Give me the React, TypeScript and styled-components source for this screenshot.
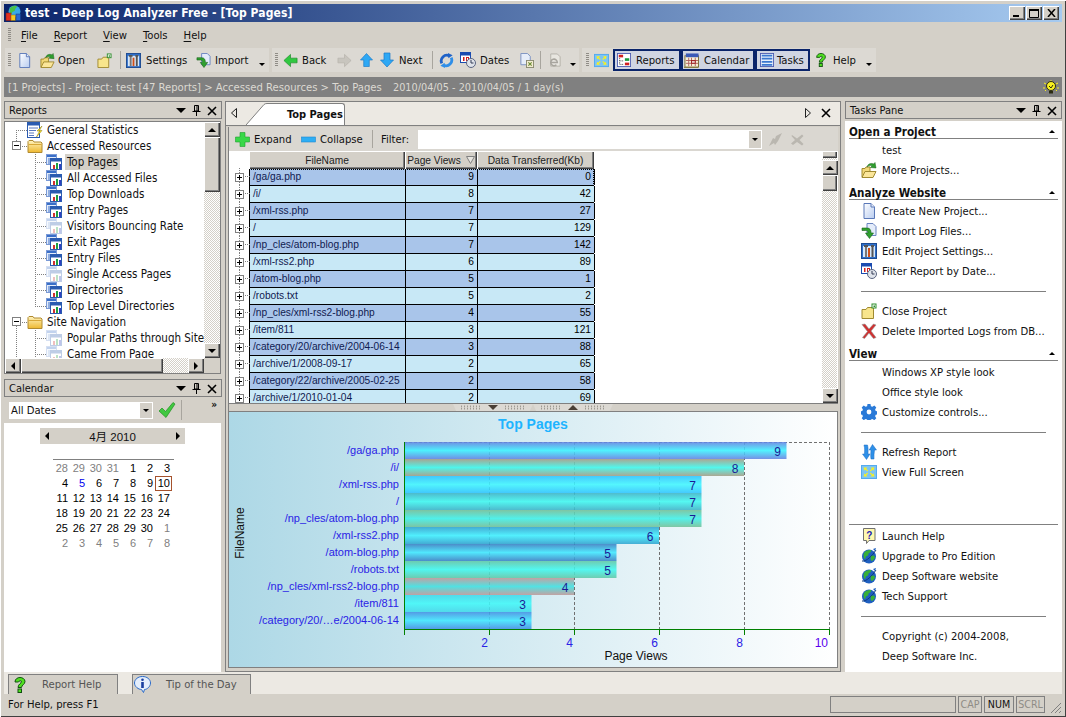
import React from 'react';
import styled, { createGlobalStyle, css } from 'styled-components';

const Global = createGlobalStyle`
    html, body { margin: 0; padding: 0; background: #d4d0c8; }
    #root { width: 1066px; height: 717px; overflow: hidden; }
    * { box-sizing: border-box; }
    svg { flex: none; display: block; }
`;

const raised = css`
    background: #d4d0c8;
    box-shadow: inset 1px 1px 0 #ffffff, inset -1px -1px 0 #404040, inset -2px -2px 0 #808080;
`;

const checker = css`
    background: repeating-conic-gradient(#ffffff 0 25%, #d4d0c8 0 50%) 0 0 / 2px 2px;
`;

const Window = styled.div`
    width: 1066px;
    height: 717px;
    display: flex;
    flex-direction: column;
    padding: 4px 4px 3px;
    background: #d4d0c8;
    box-shadow: inset 1px 1px 0 #ffffff, inset -1px -1px 0 #404040;
    font-family: "DejaVu Sans Condensed", "DejaVu Sans", sans-serif;
    font-stretch: condensed;
    font-size: 11.2px;
    color: #111111;
`;

const TitleBar = styled.div`
    height: 18px;
    flex: none;
    display: flex;
    align-items: center;
    padding: 0 3px 0 1px;
    background: linear-gradient(to right, #0a246a, #a6caf0);
    color: #ffffff;
    font-weight: bold;
    font-size: 12px;
    letter-spacing: 0.1px;
`;

const TitleText = styled.span`
    margin-left: 3px;
    flex: 1;
    white-space: nowrap;
`;

const CaptionButton = styled.div`
    ${raised}
    width: 16px;
    height: 14px;
    margin-left: 1px;
    color: #000000;
    display: flex;
    align-items: center;
    justify-content: center;
`;

const MenuBar = styled.div`
    height: 26px;
    flex: none;
    display: flex;
    align-items: center;
    gap: 16px;
`;

const Grip = styled.div<{ $ml?: number; $mr?: number }>`
    width: 3px;
    height: 14px;
    flex: none;
    margin-left: ${p => p.$ml ?? 3}px;
    margin-right: ${p => p.$mr ?? 5}px;
    background: repeating-linear-gradient(to bottom, #8f8c86 0 1px, transparent 1px 2px);
`;

const MenuItem = styled.span`
    white-space: nowrap;
    u { text-underline-offset: 2px; }
`;

const ToolRow = styled.div`
    height: 24px;
    flex: none;
    display: flex;
    gap: 3px;
    margin-left: 1px;
`;

const Toolbar = styled.div<{ $w: number }>`
    width: ${p => p.$w}px;
    flex: none;
    display: flex;
    align-items: center;
    background: #dcd9d3;
`;

const ToolButton = styled.div<{ $w: number; $pad: number; $gap?: number; $active?: boolean }>`
    width: ${p => p.$w}px;
    height: 22px;
    flex: none;
    display: flex;
    align-items: center;
    padding-left: ${p => p.$pad}px;
    gap: ${p => p.$gap ?? 4}px;
    white-space: nowrap;
    ${p => p.$active && css`
        border: 2px solid #0a246a;
        background: #d0d5e2;
    `}
`;

const ToolSep = styled.div<{ $ml: number; $mr: number }>`
    width: 1px;
    height: 18px;
    flex: none;
    margin-left: ${p => p.$ml}px;
    margin-right: ${p => p.$mr}px;
    background: #a8a59e;
`;

const DropArrow = styled.div`
    flex: 1;
    height: 22px;
    display: flex;
    align-items: flex-end;
    justify-content: center;
    padding-bottom: 5px;
    &::after {
        content: '';
        width: 0;
        height: 0;
        border-left: 3px solid transparent;
        border-right: 3px solid transparent;
        border-top: 3px solid #000000;
    }
`;

const Breadcrumb = styled.div`
    height: 20px;
    flex: none;
    margin-top: 5px;
    display: flex;
    align-items: center;
    padding: 0 2px 0 4px;
    background: #808080;
    color: #dcd9d2;
    white-space: nowrap;
`;

const Crumbs = styled.span`
    width: 385px;
    flex: none;
`;

const CrumbRange = styled.span`
    flex: 1;
    font-size: 10.8px;
`;

const Main = styled.div`
    height: 571px;
    flex: none;
    margin-top: 4px;
    display: flex;
`;

const LeftColumn = styled.div`
    width: 218px;
    flex: none;
    display: flex;
    flex-direction: column;
`;

const PaneTitle = styled.div`
    height: 18px;
    flex: none;
    display: flex;
    align-items: center;
    padding: 1px 4px 0;
    border: 1px solid #808080;
    background: #d4d0c8;
`;

const PaneName = styled.span`
    flex: 1;
    font-size: 11px;
`;

const PaneTools = styled.div`
    display: flex;
    align-items: center;
    gap: 6px;
`;

const TreeBox = styled.div`
    width: 217px;
    height: 253px;
    margin-top: 2px;
    flex: none;
    display: flex;
    flex-direction: column;
    border: 1px solid #808080;
    background: #ffffff;
`;

const TreeTop = styled.div`
    flex: 1;
    min-height: 0;
    display: flex;
`;

const TreeBody = styled.div`
    flex: 1;
    min-width: 0;
    overflow: hidden;
`;

type GuideKind = 'full' | 'top' | 'bottom';

const dotV = (x: number, kind: GuideKind = 'full') => {
    const top = kind === 'bottom' ? 8 : 0;
    const height = kind === 'full' ? '100%' : kind === 'top' ? '9px' : '8px';
    return `repeating-linear-gradient(to bottom, #808080 0 1px, transparent 1px 2px) ${x}px ${top}px / 1px ${height} no-repeat`;
};
const dotH = (x: number, w: number) =>
    `repeating-linear-gradient(to right, #808080 0 1px, transparent 1px 2px) ${x}px 8px / ${w}px 1px no-repeat`;

const TreeRow = styled.div<{ $level: number; $guide?: GuideKind; $outer?: boolean }>`
    height: 16px;
    display: flex;
    align-items: center;
    white-space: nowrap;
    padding-left: ${p => (p.$level ? 41 : 22)}px;
    gap: ${p => (p.$level ? 3 : 2)}px;
    position: relative;
    background: ${p => {
        const x = p.$level ? 30 : 11;
        const parts = [dotH(x, p.$level ? 11 : 12)];
        if (p.$guide) parts.push(dotV(x, p.$guide));
        if (p.$outer) parts.push(dotV(11));
        return parts.join(', ');
    }};
`;

const TreeLabel = styled.span<{ $selected?: boolean }>`
    padding: 0 2px;
    line-height: 16px;
    font-size: 11.5px;
    background: ${p => (p.$selected ? '#d4d0c8' : 'transparent')};
`;

const Expander = styled.div`
    position: absolute;
    top: 3px;
    width: 9px;
    height: 9px;
    border: 1px solid #808080;
    background:
        linear-gradient(#000000, #000000) center / 5px 1px no-repeat,
        #ffffff;
`;

const TreeExpander = styled(Expander)`
    left: 7px;
`;

const VScroll = styled.div`
    width: 16px;
    flex: none;
    display: flex;
    flex-direction: column;
    ${checker}
`;

const HScroll = styled.div`
    height: 15px;
    flex: none;
    display: flex;
    ${checker}
`;

const ScrollButton = styled.div`
    ${raised}
    width: 16px;
    height: 15px;
    flex: none;
    display: flex;
    align-items: center;
    justify-content: center;
`;

const VThumb = styled.div<{ $h: number }>`
    ${raised}
    height: ${p => p.$h}px;
    flex: none;
`;

const HThumb = styled.div<{ $w: number }>`
    ${raised}
    width: ${p => p.$w}px;
    flex: none;
`;

const ScrollFill = styled.div`
    flex: 1;
`;

const ScrollCorner = styled.div`
    width: 16px;
    flex: none;
    background: #d4d0c8;
`;

const Tri = styled.div<{ $dir: 'up' | 'down' | 'left' | 'right'; $size?: number; $color?: string }>`
    width: 0;
    height: 0;
    flex: none;
    ${p => {
        const s = p.$size ?? 4;
        const c = p.$color ?? '#000000';
        switch (p.$dir) {
            case 'up':
                return `border-left:${s}px solid transparent;border-right:${s}px solid transparent;border-bottom:${s}px solid ${c};`;
            case 'down':
                return `border-left:${s}px solid transparent;border-right:${s}px solid transparent;border-top:${s}px solid ${c};`;
            case 'left':
                return `border-top:${s}px solid transparent;border-bottom:${s}px solid transparent;border-right:${s}px solid ${c};`;
            default:
                return `border-top:${s}px solid transparent;border-bottom:${s}px solid transparent;border-left:${s}px solid ${c};`;
        }
    }}
`;

const CalendarTitle = styled(PaneTitle)`
    margin-top: 5px;
`;

const CalendarBar = styled.div`
    height: 26px;
    flex: none;
    display: flex;
    align-items: center;
    padding-left: 5px;
    width: 217px;
`;

const DateCombo = styled.div`
    width: 144px;
    height: 17px;
    flex: none;
    display: flex;
    align-items: center;
    justify-content: space-between;
    background: #ffffff;
    padding: 1px 1px 1px 2px;
`;

const ComboArrow = styled.div`
    ${raised}
    box-shadow: none;
    width: 12px;
    height: 100%;
    display: flex;
    align-items: center;
    justify-content: center;
`;

const CheckSlot = styled.div`
    margin-left: 5px;
`;

const CalendarSep = styled.div`
    width: 1px;
    height: 20px;
    margin-left: 5px;
    background: #a8a59e;
`;

const More = styled.div`
    flex: 1;
    align-self: flex-start;
    margin-top: 2px;
    padding-right: 4px;
    text-align: right;
    font-size: 10px;
    font-weight: bold;
    line-height: 12px;
`;

const CalendarBody = styled.div`
    width: 217px;
    flex: 1;
    background: #ffffff;
    padding-top: 5px;
`;

const MonthHeader = styled.div`
    width: 145px;
    height: 16px;
    margin-left: 36px;
    display: flex;
    align-items: center;
    justify-content: space-between;
    padding: 0 5px;
    background: #d4d0c8;
    font-family: "Liberation Sans", "Noto Sans CJK JP", sans-serif;
    font-size: 11.5px;
`;

const WeekLine = styled.div`
    width: 121px;
    height: 1px;
    margin: 15px 0 1px 49px;
    background: #808080;
`;

const Days = styled.div`
    width: 119px;
    margin-left: 49px;
    display: grid;
    grid-template-columns: repeat(7, 17px);
    grid-auto-rows: 15px;
    font-family: "Liberation Sans", sans-serif;
    font-size: 11px;
`;

const Day = styled.div<{ $muted?: boolean; $mark?: boolean; $today?: boolean }>`
    text-align: right;
    padding-right: ${p => (p.$today ? 1 : 2)}px;
    line-height: ${p => (p.$today ? 13 : 15)}px;
    color: ${p => (p.$muted ? '#808080' : p.$mark ? '#0000ee' : '#000000')};
    border: ${p => (p.$today ? '1px solid #a5522d' : 'none')};
`;

const Center = styled.div`
    width: 616px;
    flex: none;
    margin-left: 3px;
    display: flex;
    flex-direction: column;
`;

const TabStrip = styled.div`
    height: 24px;
    flex: none;
    display: flex;
    align-items: flex-end;
    padding: 0 9px 0 5px;
    background: #ece9e3;
    border: 1px solid #808080;
    border-bottom: none;
`;

const StripArrow = styled.div`
    height: 100%;
    display: flex;
    align-items: center;
    padding-bottom: 2px;
`;

const TabShape = styled.svg`
    margin-left: 9px;
`;

const ActiveTab = styled.div`
    width: 58px;
    height: 22px;
    flex: none;
    display: flex;
    align-items: center;
    background: #ffffff;
    border: 1px solid #808080;
    border-left: none;
    border-bottom: none;
    border-radius: 0 3px 0 0;
    font-weight: bold;
    font-size: 11px;
    white-space: nowrap;
`;

const StripFill = styled.div`
    flex: 1;
`;

const StripTools = styled.div`
    height: 100%;
    display: flex;
    align-items: center;
    gap: 10px;
    padding-bottom: 2px;
`;

const Frame = styled.div`
    flex: 1;
    min-height: 0;
    display: flex;
    flex-direction: column;
    border: 1px solid #808080;
    padding: 1px 2px 3px;
    background: #d4d0c8;
`;

const Inner = styled.div`
    flex: 1;
    min-height: 0;
    display: flex;
    flex-direction: column;
    border-left: 1px solid #808080;
`;

const GridToolbar = styled.div`
    height: 24px;
    flex: none;
    display: flex;
    align-items: center;
    background: #dad7d1;
    padding-left: 6px;
`;

const GridAction = styled.div<{ $w: number }>`
    width: ${p => p.$w}px;
    flex: none;
    display: flex;
    align-items: center;
    gap: 4px;
`;

const FilterLabel = styled.span`
    width: 37px;
    flex: none;
    margin-left: 8px;
`;

const FilterBox = styled.div`
    width: 344px;
    height: 19px;
    flex: none;
    display: flex;
    justify-content: flex-end;
    background: #ffffff;
    padding: 1px;
`;

const FilterActions = styled.div`
    display: flex;
    align-items: center;
    gap: 7px;
    margin-left: 6px;
`;

const GridArea = styled.div`
    height: 252px;
    flex: none;
    display: flex;
    background: #ffffff;
`;

const GridScroll = styled(VScroll)`
    width: 15px;
    margin-right: 1px;
`;

const ScrollStub = styled.div`
    ${raised}
    height: 7px;
    flex: none;
    margin-bottom: 2px;
`;

const GridBody = styled.div`
    flex: 1;
    min-width: 0;
    overflow: hidden;
    padding-left: 20px;
    position: relative;
    font-family: "Liberation Sans", sans-serif;
    font-size: 10.2px;
`;

const GridCols = css`
    display: grid;
    grid-template-columns: 156px 72px 117px;
    width: 345px;
`;

const HeaderRow = styled.div`
    ${GridCols}
    height: 18px;
`;

const HeaderCell = styled.div`
    ${raised}
    display: flex;
    align-items: center;
    justify-content: center;
    gap: 5px;
    color: #222222;
    white-space: nowrap;
`;

const DataRow = styled.div<{ $odd: boolean; $focus?: boolean }>`
    ${GridCols}
    height: 17px;
    position: relative;
    background: ${p => (p.$odd ? '#c8e8f6' : '#a9c5ea')};
    border-bottom: 1px solid #000000;
    border-left: 1px solid #000000;
    outline: ${p => (p.$focus ? '1px dotted #000000' : 'none')};
    outline-offset: -1px;
`;

const DataCell = styled.div<{ $num?: boolean }>`
    line-height: 16px;
    padding: 0 3px;
    text-align: ${p => (p.$num ? 'right' : 'left')};
    color: ${p => (p.$num ? '#000000' : '#101a50')};
    border-right: 1px solid #000000;
    white-space: nowrap;
`;

const RowExpander = styled(Expander)`
    left: -15px;
    top: 4px;
    background:
        linear-gradient(#000000, #000000) center / 5px 1px no-repeat,
        linear-gradient(#000000, #000000) center / 1px 5px no-repeat,
        #ffffff;
`;

const RowGuide = styled.div`
    position: absolute;
    left: -11px;
    top: -1px;
    bottom: -1px;
    width: 11px;
    background: ${dotV(0)}, repeating-linear-gradient(to right, #808080 0 1px, transparent 1px 2px) 0 8px / 11px 1px no-repeat;
`;

const Splitter = styled.div`
    height: 8px;
    flex: none;
    display: flex;
    padding-left: 224px;
    border-top: 1px solid #808080;
`;

const SplitGrip = styled.div`
    width: 80px;
    height: 7px;
    flex: none;
    display: flex;
    align-items: center;
    justify-content: center;
    gap: 6px;
    background: #dcd9d3;
    clip-path: polygon(0 0, 100% 0, 96% 100%, 4% 100%);
`;

const SplitDots = styled.div`
    width: 22px;
    height: 5px;
    background: radial-gradient(circle, #8f8b83 0 0.7px, transparent 0.9px) 0 0 / 3px 2.500px;
`;

const ChartBox = styled.div`
    flex: 1;
    min-height: 0;
    border: 1px solid #808080;
    border-left: none;
    background: linear-gradient(to right, #add8e6, #ffffff);
`;

const ChartSvg = styled.svg`
    width: 608px;
    height: 257px;
    font-family: "Liberation Sans", Arial, sans-serif;
    font-size: 12px;
`;

const Right = styled.div`
    width: 217px;
    flex: none;
    margin-left: 4px;
    display: flex;
    flex-direction: column;
`;

const TasksBody = styled.div`
    flex: 1;
    margin-top: 2px;
    background: #ffffff;
    padding: 3px 4px 0;
`;

const SectionHead = styled.div<{ $first?: boolean }>`
    height: 15px;
    margin: ${p => (p.$first ? 0 : 5)}px 0 1px;
    display: flex;
    align-items: center;
    justify-content: space-between;
    padding: 1px 3px 0 0;
    border-bottom: 1px solid #808080;
    font-weight: bold;
    font-size: 11.6px;
    white-space: nowrap;
`;

const TaskRow = styled.div`
    height: 20px;
    display: flex;
    align-items: center;
    gap: 5px;
    padding-left: 12px;
    white-space: nowrap;
`;

const TaskIcon = styled.div`
    width: 16px;
    height: 16px;
    flex: none;
`;

const TaskSep = styled.div`
    height: 20px;
    margin: 0 12px;
    display: flex;
    align-items: center;
    &::after {
        content: '';
        flex: 1;
        height: 1px;
        background: #808080;
    }
`;

const WideSep = styled.div`
    height: 1px;
    margin: 42px 0 1px;
    background: #808080;
`;

const BottomTabs = styled.div`
    height: 22px;
    flex: none;
    display: flex;
    align-items: flex-end;
    background: #ece9e3;
    padding-left: 4px;
`;

const BottomTab = styled.div<{ $w: number; $ml?: number; $pad: number; $gap: number }>`
    width: ${p => p.$w}px;
    height: 20px;
    flex: none;
    margin-left: ${p => p.$ml ?? 0}px;
    display: flex;
    align-items: center;
    gap: ${p => p.$gap}px;
    padding-left: ${p => p.$pad}px;
    background: #d4d0c8;
    border: 1px solid #808080;
    border-bottom: none;
    color: #555555;
    white-space: nowrap;
`;

const StatusBar = styled.div`
    height: 20px;
    flex: none;
    display: flex;
    align-items: center;
    gap: 2px;
    padding: 1px 0 0 4px;
`;

const StatusText = styled.span`
    flex: 1;
`;

const StatusPanel = styled.div<{ $w: number; $off?: boolean }>`
    width: ${p => p.$w}px;
    height: 17px;
    flex: none;
    text-align: center;
    line-height: 15px;
    font-size: 10.6px;
    border: 1px solid #808080;
    color: ${p => (p.$off ? '#8f8c86' : '#111111')};
`;

const SizeGrip = styled.svg`
    margin-left: 1px;
    align-self: flex-end;
`;

/* ---- icons ---- */

type IconProps = { size?: number };

const PageIcon = ({ size = 16 }: IconProps) => (
    <svg width={size} height={size} viewBox="0 0 16 16">
        <defs>
            <linearGradient id="pg" x1="0" y1="0" x2="1" y2="1">
                <stop offset="0" stopColor="#ffffff" />
                <stop offset="1" stopColor="#b8ccf0" />
            </linearGradient>
        </defs>
        <path d="M3 .5h7l3.500 3.500v11.500h-10.500z" fill="url(#pg)" stroke="#5a78b8" />
        <path d="M10 .5v3.500h3.500" fill="#e8eefa" stroke="#5a78b8" />
    </svg>
);

const OpenIcon = ({ size = 16 }: IconProps) => (
    <svg width={size} height={size} viewBox="0 0 16 16">
        <path d="M1 6.500h3l1-1.500h4v10h-8z" fill="#f2d878" stroke="#a08a30" />
        <path d="M1 15.500l3-6h11l-3 6z" fill="#fbe69a" stroke="#a08a30" />
        <path d="M6 5c1-4 5-4 7-3l1-1.500 1 5.500-5.500-.5 1.500-1.500c-1.500-.7-3.500-.5-5 1z" fill="#2e9e2e" stroke="#176117" strokeWidth=".5" />
    </svg>
);

const FolderGreen = ({ size = 16 }: IconProps) => (
    <svg width={size} height={size} viewBox="0 0 16 16">
        <path d="M1 6.500h4l1.500-2h6v11h-11.500z" fill="#f8e58c" stroke="#a08a30" />
        <rect x="11" y="1" width="4" height="4" fill="#ffffff" stroke="#2e8e2e" />
        <rect x="12.500" y="2.500" width="1.500" height="1.500" fill="#2e8e2e" />
    </svg>
);

const SettingsIcon = ({ size = 16 }: IconProps) => (
    <svg width={size} height={size} viewBox="0 0 16 16">
        <rect x=".5" y=".5" width="15" height="15" fill="#2f6fc8" stroke="#1c4a92" />
        <rect x="2" y="3" width="12" height="11" fill="#d6e8fb" />
        <path d="M5 3v11" stroke="#777777" strokeWidth="2" />
        <path d="M8 5v9" stroke="#d05018" strokeWidth="2" />
        <path d="M11.500 3v11" stroke="#555555" strokeWidth="2" />
        <path d="M3 3h4M10 3h3" stroke="#555555" strokeWidth="2" />
    </svg>
);

const ImportIcon = ({ size = 16 }: IconProps) => (
    <svg width={size} height={size} viewBox="0 0 16 16">
        <path d="M6 .5h6l3 3v9h-9z" fill="#e4ecfa" stroke="#6a84c0" />
        <path d="M1 5h5c3 0 4 2 4 5h2.500l-4 5.500-4-5.500h2.500c0-2-1-2.500-2.500-2.500h-3.500z" fill="#2fa02f" stroke="#176117" strokeWidth=".6" />
    </svg>
);

const ArrowH = ({ dir, fill, line, size = 16 }: { dir: 'l' | 'r'; fill: string; line: string; size?: number }) => (
    <svg width={size} height={size} viewBox="0 0 16 16">
        <path
            d={dir === 'l' ? 'M1 8l7-6.500v4h7v5h-7v4z' : 'M15 8l-7-6.500v4h-7v5h7v4z'}
            fill={fill}
            stroke={line}
            strokeWidth=".7"
        />
    </svg>
);

const ArrowV = ({ dir, size = 14 }: { dir: 'u' | 'd'; size?: number }) => (
    <svg width={size} height={16} viewBox="0 0 14 16">
        <path
            d={dir === 'u' ? 'M7 1l6.500 7h-3.500v7h-6v-7h-3.500z' : 'M7 15l6.500-7h-3.500v-7h-6v7h-3.500z'}
            fill="#2ea8f4"
            stroke="#1a78c8"
            strokeWidth=".7"
        />
    </svg>
);

const RefreshIcon = ({ size = 16 }: IconProps) => (
    <svg width={size} height={size} viewBox="0 0 16 16" fill="none">
        <path d="M3 11a6 6 0 0 1 8-8" stroke="#1f62c8" strokeWidth="3" />
        <path d="M13 5a6 6 0 0 1-8 8" stroke="#2f8ee8" strokeWidth="3" />
        <path d="M9.500 0l5 2.500-4.500 3z" fill="#1f62c8" />
        <path d="M6.500 16l-5-2.500 4.500-3z" fill="#2f8ee8" />
    </svg>
);

const DatesIcon = ({ size = 16 }: IconProps) => (
    <svg width={size} height={size} viewBox="0 0 16 16">
        <rect x=".5" y=".5" width="10" height="10" fill="#ffffff" stroke="#1a4bb0" />
        <rect x="1" y="1" width="9" height="2.500" fill="#1a4bb0" />
        <rect x="3" y="5" width="1.500" height="4" fill="#d02020" />
        <rect x="6" y="5" width="3" height="4" fill="#d02020" />
        <rect x="7" y="6" width="1" height="2" fill="#ffffff" />
        <circle cx="11" cy="11" r="4.500" fill="#dfe3ea" stroke="#5a6580" />
        <path d="M11 8v3h2.500" stroke="#333a55" fill="none" />
    </svg>
);

const DocXIcon = ({ size = 16 }: IconProps) => (
    <svg width={size} height={size} viewBox="0 0 16 16">
        <path d="M2 .5h7l3 3v9h-10z" fill="#e6edf9" stroke="#7a90c0" />
        <rect x="8" y="8" width="7.500" height="7.500" fill="#f3ecd2" stroke="#8a8a70" />
        <path d="M10 10l3.500 3.500M13.500 10l-3.500 3.500" stroke="#6a8a30" strokeWidth="1.200" />
    </svg>
);

const GrayIE = ({ size = 16 }: IconProps) => (
    <svg width={size} height={size} viewBox="0 0 16 16">
        <path d="M4 1h7l3 3v10h-10z" fill="#e8e6e0" stroke="#b4b1aa" />
        <path d="M4 10h7a3.500 3.500 0 1 0-1 2.500" fill="none" stroke="#a8a59e" strokeWidth="1.600" />
    </svg>
);

const FullIcon = ({ size = 16 }: IconProps) => (
    <svg width={size} height={size} viewBox="0 0 16 16">
        <rect x="0" y="1" width="16" height="14" fill="#55aaee" />
        <rect x="1" y="2" width="14" height="12" fill="#7cc4f4" />
        <path d="M2.500 3.500h4l-1.300 1.300 2 1.700-1 1-1.700-2-1 1.300zM13.500 3.500h-4l1.300 1.300-2 1.700 1 1 1.700-2 1 1.300zM2.500 12.500h4l-1.300-1.300 2-1.700-1-1-1.700 2-1-1.300zM13.500 12.500h-4l1.300-1.300-2-1.700 1-1 1.700 2 1-1.300z" fill="#f8f020" />
    </svg>
);

const ReportsIcon = ({ size = 16 }: IconProps) => (
    <svg width={size} height={size} viewBox="0 0 16 16">
        <rect x=".5" y=".5" width="15" height="15" fill="#ffffff" stroke="#4a5ab0" />
        <rect x="2" y="2" width="5" height="3" fill="#d02020" />
        <rect x="9" y="6" width="5" height="3" fill="#1a9a3a" />
        <rect x="9" y="11" width="5" height="3" fill="#d02020" />
        <path d="M3 6v8M4 9h4M4 13h4" stroke="#222222" strokeDasharray="1 1" />
    </svg>
);

const CalendarIcon = ({ size = 16 }: IconProps) => (
    <svg width={size} height={size} viewBox="0 0 16 16">
        <rect x="1" y="3" width="14.500" height="12" fill="#f6f0d8" stroke="#7a6a30" />
        <rect x="2" y=".5" width="13.500" height="4" fill="#3a5ab8" />
        <path d="M5 5v9M8 5v9M12 5v9M2 8h13M2 11h13" stroke="#b06060" />
        <rect x="8" y="8" width="4" height="3" fill="#e8c8c8" stroke="#a02020" />
        <path d="M0 15.500h15" stroke="#8a7a40" />
    </svg>
);

const TasksIcon = ({ size = 16 }: IconProps) => (
    <svg width={size} height={size} viewBox="0 0 16 16">
        <rect x=".5" y=".5" width="15" height="15" fill="#e4eefb" stroke="#4a5ab0" />
        <path d="M2 3h12M2 6.500h12M2 10h12M2 13.500h12" stroke="#3a78d0" strokeWidth="2" />
    </svg>
);

const HelpIcon = ({ size = 16 }: IconProps) => (
    <svg width={size} height={size} viewBox="0 0 16 16">
        <path
            d="M3 5c0-3 2.500-4.500 5-4.500s5 1.500 5 4c0 3-3.500 3.500-3.500 6h-3.500c0-3.500 3.500-4 3.500-6 0-1-2.500-1-3 .5z"
            fill="#50e020"
            stroke="#105010"
        />
        <rect x="6" y="12" width="3.500" height="3.500" fill="#50e020" stroke="#105010" />
    </svg>
);

const TreeReportIcon = ({ off, size = 16 }: { off?: boolean; size?: number }) => (
    <svg width={size} height={size} viewBox="0 0 16 16" opacity={off ? 0.3 : 1}>
        <rect x=".5" y=".5" width="10" height="10" fill="#e4ecf9" stroke="#7a9ad6" />
        <rect x="1" y="1" width="9" height="2" fill="#3a6fc8" />
        <path d="M2 5h2M2 7h2M2 9h2" stroke="#3a6fc8" />
        <rect x="4.500" y="4.500" width="11" height="11" fill="#ffffff" stroke="#2a5bb0" />
        <rect x="5" y="5" width="10" height="2.500" fill="#2a5bb0" />
        <rect x="7" y="11" width="2" height="4" fill="#d03030" />
        <rect x="10" y="9" width="2" height="6" fill="#20a040" />
        <rect x="13" y="10" width="2" height="5" fill="#3040c0" />
    </svg>
);

const StatsIcon = ({ size = 16 }: IconProps) => (
    <svg width={size} height={size} viewBox="0 0 16 16">
        <rect x=".5" y=".5" width="12" height="15" fill="#ffffff" stroke="#2a5bb0" />
        <rect x="1" y="1" width="11" height="2.500" fill="#2a5bb0" />
        <path d="M2 6h9M2 8.500h7M2 11h5M2 13.500h5" stroke="#5a7ac0" />
        <path d="M15 4l-5 5h2.500l-3 6 5.500-6.500h-2.500z" fill="#f8e020" stroke="#8a7a10" strokeWidth=".5" />
    </svg>
);

const TreeFolder = ({ size = 16 }: IconProps) => (
    <svg width={size} height={size} viewBox="0 0 16 16">
        <defs>
            <linearGradient id="fo" x1="0" y1="0" x2="0" y2="1">
                <stop offset="0" stopColor="#fff4c0" />
                <stop offset="1" stopColor="#eeb830" />
            </linearGradient>
        </defs>
        <path d="M1 14.500v-11l1-1h4l1 1.500h7l1 1v9.500z" fill="url(#fo)" stroke="#b08a30" />
        <path d="M1.500 6.500h13" stroke="#d8a838" />
    </svg>
);

const CheckIcon = ({ size = 18 }: IconProps) => (
    <svg width={size} height={size} viewBox="0 0 18 18">
        <path d="M1 10l3-3 3.500 3.500 7.500-9 2 1.500-9 13.500z" fill="#40c840" stroke="#209020" strokeWidth=".7" />
    </svg>
);

const PlusIcon = ({ size = 15 }: IconProps) => (
    <svg width={size} height={size} viewBox="0 0 15 15">
        <path d="M5 .5h5v4.500h4.500v5h-4.500v4.500h-5v-4.500h-4.500v-5h4.500z" fill="#38d848" stroke="#20a030" strokeWidth=".6" />
    </svg>
);

const MinusIcon = ({ size = 15 }: IconProps) => (
    <svg width={size} height={size} viewBox="0 0 15 15">
        <rect x=".5" y="5" width="14" height="5" fill="#2eaef4" stroke="#2088d0" strokeWidth=".6" />
    </svg>
);

const GrayBolt = () => (
    <svg width="15" height="15" viewBox="0 0 15 15">
        <path d="M14 1l-6 3-1 3-2-1-4 8 5-3 1 2 3-4z" fill="#bab7b0" />
    </svg>
);

const GrayCross = () => (
    <svg width="15" height="15" viewBox="0 0 15 15">
        <path d="M2 3l5 3.500 5-4 1.500 1.500-4 4 4 4-1.500 1.500-5-3.500-4 3-2-1.500 4-3.500-3.500-4z" fill="#bab7b0" />
    </svg>
);

const RedX = ({ size = 16 }: IconProps) => (
    <svg width={size} height={size} viewBox="0 0 16 16">
        <path d="M1 1.500l3-.5 4 5 4.500-5 2.500 1-5 6 5 6.500-2.500 1-4.500-5.500-4.500 5.500-2-1 5-6z" fill="#d03030" stroke="#909090" strokeWidth=".6" />
    </svg>
);

const GearIcon = ({ size = 16 }: IconProps) => (
    <svg width={size} height={size} viewBox="0 0 16 16">
        <path
            d="M6.500 0h3l.4 2.200 1.500.6 1.900-1.200 2 2-1.200 1.900.6 1.500 2.200.4v3l-2.200.4-.6 1.500 1.200 1.900-2 2-1.900-1.200-1.500.6-.4 2.200h-3l-.4-2.200-1.500-.6-1.900 1.200-2-2 1.200-1.900-.6-1.500-2.200-.4v-3l2.200-.4.6-1.500-1.200-1.900 2-2 1.900 1.200 1.500-.6z"
            fill="#2a7ad8"
        />
        <circle cx="8" cy="8" r="2.400" fill="#ffffff" />
    </svg>
);

const RefreshVIcon = ({ size = 16 }: IconProps) => (
    <svg width={size} height={size} viewBox="0 0 16 16">
        <path d="M3 1h3.500c1 4 .5 6.500 .5 9h2l-3.500 5.500-4-5.500h2c0-3 .5-5-.5-9z" fill="#2e90e8" stroke="#1a68c0" strokeWidth=".5" />
        <path d="M13 15h-3c-.6-3-.2-6 0-9h-1.800l3.300-5.500 4 5.500h-2c-.3 3-.8 6-.5 9z" fill="#2e90e8" stroke="#1a68c0" strokeWidth=".5" />
    </svg>
);

const LaunchHelpIcon = ({ size = 16 }: IconProps) => (
    <svg width={size} height={size} viewBox="0 0 16 16">
        <path d="M2.500 .5h11.500v12h-6l-2.500 3v-3h-3z" fill="#fff8b0" stroke="#707070" />
        <text x="8.200" y="10.500" fontSize="10" fontWeight="bold" textAnchor="middle" fill="#1a1ab0" fontFamily="Liberation Sans">?</text>
    </svg>
);

const GlobeIcon = ({ size = 16 }: IconProps) => (
    <svg width={size} height={size} viewBox="0 0 16 16">
        <circle cx="8" cy="8.500" r="7" fill="#1f5fc0" />
        <path d="M3 5c2-3 5-3 7-3 1 1-1 3-2 3s0 3-2 3-1 3-2 3-2-3-1-6zM10 8c2-1 4 0 4 1s-2 4-3 4-2-3-1-5z" fill="#38b038" />
        <path d="M1 13c4 1 10-5 14-11" stroke="#0e3a80" fill="none" />
        <path d="M12 1l3-1-1 3z" fill="#1f5fc0" />
    </svg>
);

const AppIcon = () => (
    <svg width="17" height="16" viewBox="0 0 17 16">
        <circle cx="9.500" cy="6.500" r="6" fill="#38a8e8" />
        <path d="M5 3c2-2 5-2.500 7-2 0 2-2 2-2 4s-3 1-3 3-2 1-2-1-1-2 0-4z" fill="#48c048" />
        <rect x="1" y="8" width="5" height="7.500" fill="#e03020" stroke="#8a1810" strokeWidth=".5" />
        <rect x="6" y="10" width="4.500" height="5.500" fill="#f8c820" stroke="#907010" strokeWidth=".5" />
        <rect x="11" y="9" width="4.500" height="6.500" fill="#2a68d0" stroke="#123a80" strokeWidth=".5" />
    </svg>
);

const InfoIcon = ({ size = 17 }: IconProps) => (
    <svg width={size} height={size} viewBox="0 0 17 17">
        <path d="M8.500 .5c4.400 0 8 2.800 8 6.500s-3.600 6.500-6 6.500l-1 3-2-3c-3 0-7-2.800-7-6.500s3.600-6.500 8-6.500z" fill="#e4eefc" stroke="#2a6ac8" />
        <circle cx="8.500" cy="3.800" r="1.300" fill="#1a3fa0" />
        <rect x="7.200" y="6" width="2.600" height="6" fill="#1a3fa0" />
    </svg>
);

const BulbIcon = () => (
    <svg width="18" height="16" viewBox="0 0 18 16">
        <path d="M9 1v1M2 4l2 1M16 4l-2 1M1 9h2M15 9h2M3 12l1-1M15 12l-1-1" stroke="#f8f020" />
        <circle cx="9" cy="7" r="4.500" fill="#f8f020" stroke="#2a2a10" />
        <path d="M7 7l2 2 2-3" stroke="#2a2a10" fill="none" />
        <rect x="7" y="12" width="4" height="2.500" fill="#2a2a10" />
    </svg>
);

const PinIcon = () => (
    <svg width="9" height="11" viewBox="0 0 9 11">
        <path d="M2.500 .5h4v5.500h-4zM5 1v5" stroke="#000000" fill="none" />
        <path d="M.5 6.500h8M4.500 7v4" stroke="#000000" />
    </svg>
);

const CloseIcon = () => (
    <svg width="10" height="10" viewBox="0 0 10 10">
        <path d="M1 1l8 8M9 1l-8 8" stroke="#000000" strokeWidth="1.600" />
    </svg>
);

const HollowArrow = ({ dir }: { dir: 'l' | 'r' }) => (
    <svg width="6" height="10" viewBox="0 0 6 10">
        <path d={dir === 'l' ? 'M5.500 .5v9l-5-4.500z' : 'M.5 .5v9l5-4.500z'} fill="none" stroke="#222222" />
    </svg>
);

const PaneButtons = () => (
    <PaneTools>
        <Tri $dir="down" $size={5} />
        <PinIcon />
        <CloseIcon />
    </PaneTools>
);

/* ---- data ---- */

const statsRows = [
    ['/ga/ga.php', 9, 0],
    ['/i/', 8, 42],
    ['/xml-rss.php', 7, 27],
    ['/', 7, 129],
    ['/np_cles/atom-blog.php', 7, 142],
    ['/xml-rss2.php', 6, 89],
    ['/atom-blog.php', 5, 1],
    ['/robots.txt', 5, 2],
    ['/np_cles/xml-rss2-blog.php', 4, 55],
    ['/item/811', 3, 121],
    ['/category/20/archive/2004-06-14', 3, 88],
    ['/archive/1/2008-09-17', 2, 65],
    ['/category/22/archive/2005-02-25', 2, 58],
    ['/archive/1/2010-01-04', 2, 69],
] as const;

const bars = [
    { label: '/ga/ga.php', value: 9, edge: '#6482e2', mid: '#3cf2ff' },
    { label: '/i/', value: 8, edge: '#a39c84', mid: '#3ef6ea' },
    { label: '/xml-rss.php', value: 7, edge: '#2ec4ff', mid: '#40f6ff' },
    { label: '/', value: 7, edge: '#3cb4c8', mid: '#40f8f0' },
    { label: '/np_cles/atom-blog.php', value: 7, edge: '#72c098', mid: '#40f0e8' },
    { label: '/xml-rss2.php', value: 6, edge: '#30a4d0', mid: '#40f0ff' },
    { label: '/atom-blog.php', value: 5, edge: '#3a80c4', mid: '#40e8ff' },
    { label: '/robots.txt', value: 5, edge: '#60c8a8', mid: '#40f8f0' },
    { label: '/np_cles/xml-rss2-blog.php', value: 4, edge: '#c09898', mid: '#40e0e0' },
    { label: '/item/811', value: 3, edge: '#40d8ea', mid: '#40f8f8' },
    { label: '/category/20/…e/2004-06-14', value: 3, edge: '#4490e4', mid: '#40e8ff' },
];

const calendarDays: { d: number; muted?: boolean; mark?: boolean; today?: boolean }[] = [
    { d: 28, muted: true }, { d: 29, muted: true }, { d: 30, muted: true }, { d: 31, muted: true },
    { d: 1 }, { d: 2 }, { d: 3 },
    { d: 4 }, { d: 5, mark: true }, { d: 6 }, { d: 7 }, { d: 8 }, { d: 9 }, { d: 10, today: true },
    { d: 11 }, { d: 12 }, { d: 13 }, { d: 14 }, { d: 15 }, { d: 16 }, { d: 17 },
    { d: 18 }, { d: 19 }, { d: 20 }, { d: 21 }, { d: 22 }, { d: 23 }, { d: 24 },
    { d: 25 }, { d: 26 }, { d: 27 }, { d: 28 }, { d: 29 }, { d: 30 }, { d: 1, muted: true },
    { d: 2, muted: true }, { d: 3, muted: true }, { d: 4, muted: true }, { d: 5, muted: true },
    { d: 6, muted: true }, { d: 7, muted: true }, { d: 8, muted: true },
];

const reportItems = [
    { name: 'Top Pages', selected: true },
    { name: 'All Accessed Files' },
    { name: 'Top Downloads' },
    { name: 'Entry Pages' },
    { name: 'Visitors Bouncing Rate', off: true },
    { name: 'Exit Pages' },
    { name: 'Entry Files' },
    { name: 'Single Access Pages', off: true },
    { name: 'Directories' },
    { name: 'Top Level Directories' },
];

const PX = 42.5;
const X0 = 404;
const PLOT_TOP = 441;
const PLOT_BOTTOM = 628;

const Chart = () => (
    <ChartSvg viewBox="229 411 608 257">
        <defs>
            {bars.map((b, i) => (
                <linearGradient key={i} id={`bar${i}`} x1="0" y1="0" x2="0" y2="1">
                    <stop offset="0" stopColor={b.edge} />
                    <stop offset="0.5" stopColor={b.mid} />
                    <stop offset="1" stopColor={b.edge} />
                </linearGradient>
            ))}
        </defs>
        <text x="533" y="428" textAnchor="middle" fontSize="14" fontWeight="bold" fill="#1eb4ff">Top Pages</text>
        <path d={`M${X0} ${PLOT_TOP + 0.5}H829.5`} stroke="#707070" strokeDasharray="3 2" fill="none" />
        {[2, 4, 6, 8, 10].map(t => (
            <path
                key={t}
                d={`M${Math.round(X0 + t * PX) + 0.5} ${PLOT_TOP}V${PLOT_BOTTOM}`}
                stroke="#707070"
                strokeDasharray="3 2"
                fill="none"
            />
        ))}
        {bars.map((b, i) => {
            const y = PLOT_TOP + i * 17;
            return (
                <g key={i}>
                    <rect x={X0} y={y} width={b.value * PX} height={17} fill={`url(#bar${i})`} fillOpacity={0.88} />
                    <text x={399} y={y + 11.5} textAnchor="end" fontSize="11" fill="#2a22e6">{b.label}</text>
                    <text x={X0 + b.value * PX - 5.5} y={y + 14} textAnchor="end" fill="#1a1a96">{b.value}</text>
                </g>
            );
        })}
        <path d={`M${X0 + 0.5} ${PLOT_TOP}V634`} stroke="#008000" fill="none" />
        <path d={`M${X0} ${PLOT_BOTTOM + 0.5}H830`} stroke="#008000" fill="none" />
        {[2, 4, 6, 8, 10].map(t => {
            const x = Math.round(X0 + t * PX);
            return (
                <g key={t}>
                    <path d={`M${x + 0.5} ${PLOT_BOTTOM}V634`} stroke="#008000" fill="none" />
                    <text x={x - 1} y={646} textAnchor="end" fill={t === 10 ? '#5a00ee' : '#2a22e6'}>{t}</text>
                </g>
            );
        })}
        <text x="636" y="659" textAnchor="middle" fill="#111111">Page Views</text>
        <text transform="translate(244 532) rotate(-90)" textAnchor="middle" fill="#111111">FileName</text>
    </ChartSvg>
);

const App = () => (
    <Window>
        <Global />
        <TitleBar>
            <AppIcon />
            <TitleText>test - Deep Log Analyzer Free - [Top Pages]</TitleText>
            <CaptionButton>
                <svg width="8" height="8" viewBox="0 0 8 8"><rect x="0" y="6" width="6" height="2" fill="#000" /></svg>
            </CaptionButton>
            <CaptionButton>
                <svg width="10" height="9" viewBox="0 0 10 9"><path d="M.5 1.500h9v7h-9z" fill="none" stroke="#000" /><path d="M0 1h10" stroke="#000" strokeWidth="2" /></svg>
            </CaptionButton>
            <CaptionButton>
                <svg width="9" height="8" viewBox="0 0 9 8"><path d="M1 0l7 8M8 0l-7 8" stroke="#000" strokeWidth="1.500" /></svg>
            </CaptionButton>
        </TitleBar>

        <MenuBar>
            <Grip $mr={-6} $ml={4} />
            <MenuItem><u>F</u>ile</MenuItem>
            <MenuItem><u>R</u>eport</MenuItem>
            <MenuItem><u>V</u>iew</MenuItem>
            <MenuItem><u>T</u>ools</MenuItem>
            <MenuItem><u>H</u>elp</MenuItem>
        </MenuBar>

        <ToolRow>
            <Toolbar $w={264}>
                <Grip $ml={3} $mr={5} />
                <ToolButton $w={20} $pad={1}><PageIcon size={15} /></ToolButton>
                <ToolButton $w={57} $pad={4} $gap={3}><OpenIcon size={15} />Open</ToolButton>
                <ToolButton $w={23} $pad={4}><FolderGreen size={15} /></ToolButton>
                <ToolSep $ml={4} $mr={3} />
                <ToolButton $w={68} $pad={2} $gap={5}><SettingsIcon size={15} />Settings</ToolButton>
                <ToolButton $w={62} $pad={4}><ImportIcon size={15} />Import</ToolButton>
                <DropArrow />
            </Toolbar>
            <Toolbar $w={307}>
                <Grip $ml={3} $mr={2} />
                <ToolButton $w={52} $pad={3}><ArrowH dir="l" fill="#30c840" line="#1a8a28" size={15} />Back</ToolButton>
                <ToolButton $w={24} $pad={5}><ArrowH dir="r" fill="#c8c5be" line="#b4b1aa" size={15} /></ToolButton>
                <ToolButton $w={20} $pad={4}><ArrowV dir="u" size={13} /></ToolButton>
                <ToolButton $w={51} $pad={4} $gap={5}><ArrowV dir="d" />Next</ToolButton>
                <ToolSep $ml={5} $mr={3} />
                <ToolButton $w={21} $pad={3}><RefreshIcon size={15} /></ToolButton>
                <ToolButton $w={58} $pad={3}><DatesIcon />Dates</ToolButton>
                <ToolButton $w={21} $pad={4}><DocXIcon size={15} /></ToolButton>
                <ToolSep $ml={4} $mr={3} />
                <ToolButton $w={22} $pad={3}><GrayIE size={15} /></ToolButton>
                <DropArrow />
            </Toolbar>
            <Toolbar $w={294}>
                <Grip $ml={4} $mr={3} />
                <ToolButton $w={21} $pad={2}><FullIcon size={15} /></ToolButton>
                <ToolButton $w={68} $pad={2} $gap={5} $active><ReportsIcon size={14} />Reports</ToolButton>
                <ToolButton $w={74} $pad={1} $gap={5} $active><CalendarIcon size={15} />Calendar</ToolButton>
                <ToolButton $w={55} $pad={3} $gap={3} $active><TasksIcon size={14} />Tasks</ToolButton>
                <ToolButton $w={52} $pad={4} $gap={5}><HelpIcon size={14} />Help</ToolButton>
                <DropArrow />
            </Toolbar>
        </ToolRow>

        <Breadcrumb>
            <Crumbs>[1 Projects] - Project: test [47 Reports] &gt; Accessed Resources &gt; Top Pages</Crumbs>
            <CrumbRange>2010/04/05 - 2010/04/05 / 1 day(s)</CrumbRange>
            <BulbIcon />
        </Breadcrumb>

        <Main>
            <LeftColumn>
                <PaneTitle>
                    <PaneName>Reports</PaneName>
                    <PaneButtons />
                </PaneTitle>
                <TreeBox>
                    <TreeTop>
                        <TreeBody>
                            <TreeRow $level={0} $guide="bottom">
                                <StatsIcon />
                                <TreeLabel>General Statistics</TreeLabel>
                            </TreeRow>
                            <TreeRow $level={0} $guide="top">
                                <TreeExpander />
                                <TreeFolder />
                                <TreeLabel>Accessed Resources</TreeLabel>
                            </TreeRow>
                            {reportItems.map((r, i) => (
                                <TreeRow key={r.name} $level={1} $guide={i === reportItems.length - 1 ? 'top' : 'full'}>
                                    <TreeReportIcon off={r.off} />
                                    <TreeLabel $selected={r.selected}>{r.name}</TreeLabel>
                                </TreeRow>
                            ))}
                            <TreeRow $level={0} $guide="bottom">
                                <TreeExpander />
                                <TreeFolder />
                                <TreeLabel>Site Navigation</TreeLabel>
                            </TreeRow>
                            <TreeRow $level={1} $guide="full" $outer>
                                <TreeReportIcon off />
                                <TreeLabel>Popular Paths through Site</TreeLabel>
                            </TreeRow>
                            <TreeRow $level={1} $guide="full" $outer>
                                <TreeReportIcon off />
                                <TreeLabel>Came From Page</TreeLabel>
                            </TreeRow>
                        </TreeBody>
                        <VScroll>
                            <ScrollButton><Tri $dir="up" /></ScrollButton>
                            <VThumb $h={55} />
                            <ScrollFill />
                            <ScrollButton><Tri $dir="down" /></ScrollButton>
                        </VScroll>
                    </TreeTop>
                    <HScroll>
                        <ScrollButton><Tri $dir="left" /></ScrollButton>
                        <HThumb $w={142} />
                        <ScrollFill />
                        <ScrollButton><Tri $dir="right" /></ScrollButton>
                        <ScrollCorner />
                    </HScroll>
                </TreeBox>

                <CalendarTitle>
                    <PaneName>Calendar</PaneName>
                    <PaneButtons />
                </CalendarTitle>
                <CalendarBar>
                    <DateCombo>
                        All Dates
                        <ComboArrow><Tri $dir="down" $size={3} /></ComboArrow>
                    </DateCombo>
                    <CheckSlot><CheckIcon /></CheckSlot>
                    <CalendarSep />
                    <More>»</More>
                </CalendarBar>
                <CalendarBody>
                    <MonthHeader>
                        <Tri $dir="left" />
                        <span>4月 2010</span>
                        <Tri $dir="right" />
                    </MonthHeader>
                    <WeekLine />
                    <Days>
                        {calendarDays.map((c, i) => (
                            <Day key={i} $muted={c.muted} $mark={c.mark} $today={c.today}>{c.d}</Day>
                        ))}
                    </Days>
                </CalendarBody>
            </LeftColumn>

            <Center>
                <TabStrip>
                    <StripArrow><HollowArrow dir="l" /></StripArrow>
                    <TabShape width="41" height="22" viewBox="0 0 41 22">
                        <path d="M0 22L18 1.500Q19 .5 21 .5H41V22z" fill="#ffffff" />
                        <path d="M0 22L18 1.500Q19 .5 21 .5H41" fill="none" stroke="#808080" />
                    </TabShape>
                    <ActiveTab>Top Pages</ActiveTab>
                    <StripFill />
                    <StripTools>
                        <HollowArrow dir="r" />
                        <CloseIcon />
                    </StripTools>
                </TabStrip>
                <Frame>
                    <Inner>
                        <GridToolbar>
                            <GridAction $w={66}><PlusIcon />Expand</GridAction>
                            <GridAction $w={71}><MinusIcon />Collapse</GridAction>
                            <ToolSep $ml={0} $mr={0} />
                            <FilterLabel>Filter:</FilterLabel>
                            <FilterBox>
                                <ComboArrow><Tri $dir="down" $size={3} /></ComboArrow>
                            </FilterBox>
                            <FilterActions>
                                <GrayBolt />
                                <GrayCross />
                            </FilterActions>
                        </GridToolbar>
                        <GridArea>
                            <GridBody>
                                <HeaderRow>
                                    <HeaderCell>FileName</HeaderCell>
                                    <HeaderCell>
                                        Page Views
                                        <svg width="9" height="8" viewBox="0 0 9 8"><path d="M.5 .5h8L4.500 7.500z" fill="#e8e6e0" stroke="#808080" /></svg>
                                    </HeaderCell>
                                    <HeaderCell>Data Transferred(Kb)</HeaderCell>
                                </HeaderRow>
                                {statsRows.map((r, i) => (
                                    <DataRow key={r[0]} $odd={i % 2 === 1} $focus={i === 0}>
                                        <RowGuide />
                                        <RowExpander />
                                        <DataCell>{r[0]}</DataCell>
                                        <DataCell $num>{r[1]}</DataCell>
                                        <DataCell $num>{r[2]}</DataCell>
                                    </DataRow>
                                ))}
                            </GridBody>
                            <GridScroll>
                                <ScrollStub />
                                <ScrollButton><Tri $dir="up" /></ScrollButton>
                                <VThumb $h={16} />
                                <ScrollFill />
                                <ScrollButton><Tri $dir="down" /></ScrollButton>
                            </GridScroll>
                        </GridArea>
                        <Splitter>
                            <SplitGrip>
                                <SplitDots />
                                <Tri $dir="down" $size={5} $color="#4a3f35" />
                                <SplitDots />
                            </SplitGrip>
                            <SplitGrip>
                                <SplitDots />
                                <Tri $dir="up" $size={5} $color="#4a3f35" />
                                <SplitDots />
                            </SplitGrip>
                        </Splitter>
                        <ChartBox>
                            <Chart />
                        </ChartBox>
                    </Inner>
                </Frame>
            </Center>

            <Right>
                <PaneTitle>
                    <PaneName>Tasks Pane</PaneName>
                    <PaneButtons />
                </PaneTitle>
                <TasksBody>
                    <SectionHead $first>Open a Project<Tri $dir="up" $size={3} /></SectionHead>
                    <TaskRow><TaskIcon />test</TaskRow>
                    <TaskRow><TaskIcon><OpenIcon /></TaskIcon>More Projects...</TaskRow>
                    <SectionHead>Analyze Website<Tri $dir="up" $size={3} /></SectionHead>
                    <TaskRow><TaskIcon><PageIcon /></TaskIcon>Create New Project...</TaskRow>
                    <TaskRow><TaskIcon><ImportIcon /></TaskIcon>Import Log Files...</TaskRow>
                    <TaskRow><TaskIcon><SettingsIcon /></TaskIcon>Edit Project Settings...</TaskRow>
                    <TaskRow><TaskIcon><DatesIcon /></TaskIcon>Filter Report by Date...</TaskRow>
                    <TaskSep />
                    <TaskRow><TaskIcon><FolderGreen /></TaskIcon>Close Project</TaskRow>
                    <TaskRow><TaskIcon><RedX /></TaskIcon>Delete Imported Logs from DB...</TaskRow>
                    <SectionHead>View<Tri $dir="up" $size={3} /></SectionHead>
                    <TaskRow><TaskIcon />Windows XP style look</TaskRow>
                    <TaskRow><TaskIcon />Office style look</TaskRow>
                    <TaskRow><TaskIcon><GearIcon /></TaskIcon>Customize controls...</TaskRow>
                    <TaskSep />
                    <TaskRow><TaskIcon><RefreshVIcon /></TaskIcon>Refresh Report</TaskRow>
                    <TaskRow><TaskIcon><FullIcon /></TaskIcon>View Full Screen</TaskRow>
                    <WideSep />
                    <TaskRow><TaskIcon><LaunchHelpIcon /></TaskIcon>Launch Help</TaskRow>
                    <TaskRow><TaskIcon><GlobeIcon /></TaskIcon>Upgrade to Pro Edition</TaskRow>
                    <TaskRow><TaskIcon><GlobeIcon /></TaskIcon>Deep Software website</TaskRow>
                    <TaskRow><TaskIcon><GlobeIcon /></TaskIcon>Tech Support</TaskRow>
                    <TaskSep />
                    <TaskRow><TaskIcon />Copyright (c) 2004-2008,</TaskRow>
                    <TaskRow><TaskIcon />Deep Software Inc.</TaskRow>
                </TasksBody>
            </Right>
        </Main>

        <BottomTabs>
            <BottomTab $w={110} $pad={3} $gap={14}><HelpIcon />Report Help</BottomTab>
            <BottomTab $w={119} $ml={14} $pad={1} $gap={15}><InfoIcon />Tip of the Day</BottomTab>
        </BottomTabs>

        <StatusBar>
            <StatusText>For Help, press F1</StatusText>
            <StatusPanel $w={126} />
            <StatusPanel $w={24} $off>CAP</StatusPanel>
            <StatusPanel $w={30}>NUM</StatusPanel>
            <StatusPanel $w={29} $off>SCRL</StatusPanel>
            <SizeGrip width="14" height="14" viewBox="0 0 14 14">
                <path d="M13 3L3 13M13 7L7 13M13 11L11 13" stroke="#808080" />
            </SizeGrip>
        </StatusBar>
    </Window>
);

export default App;
